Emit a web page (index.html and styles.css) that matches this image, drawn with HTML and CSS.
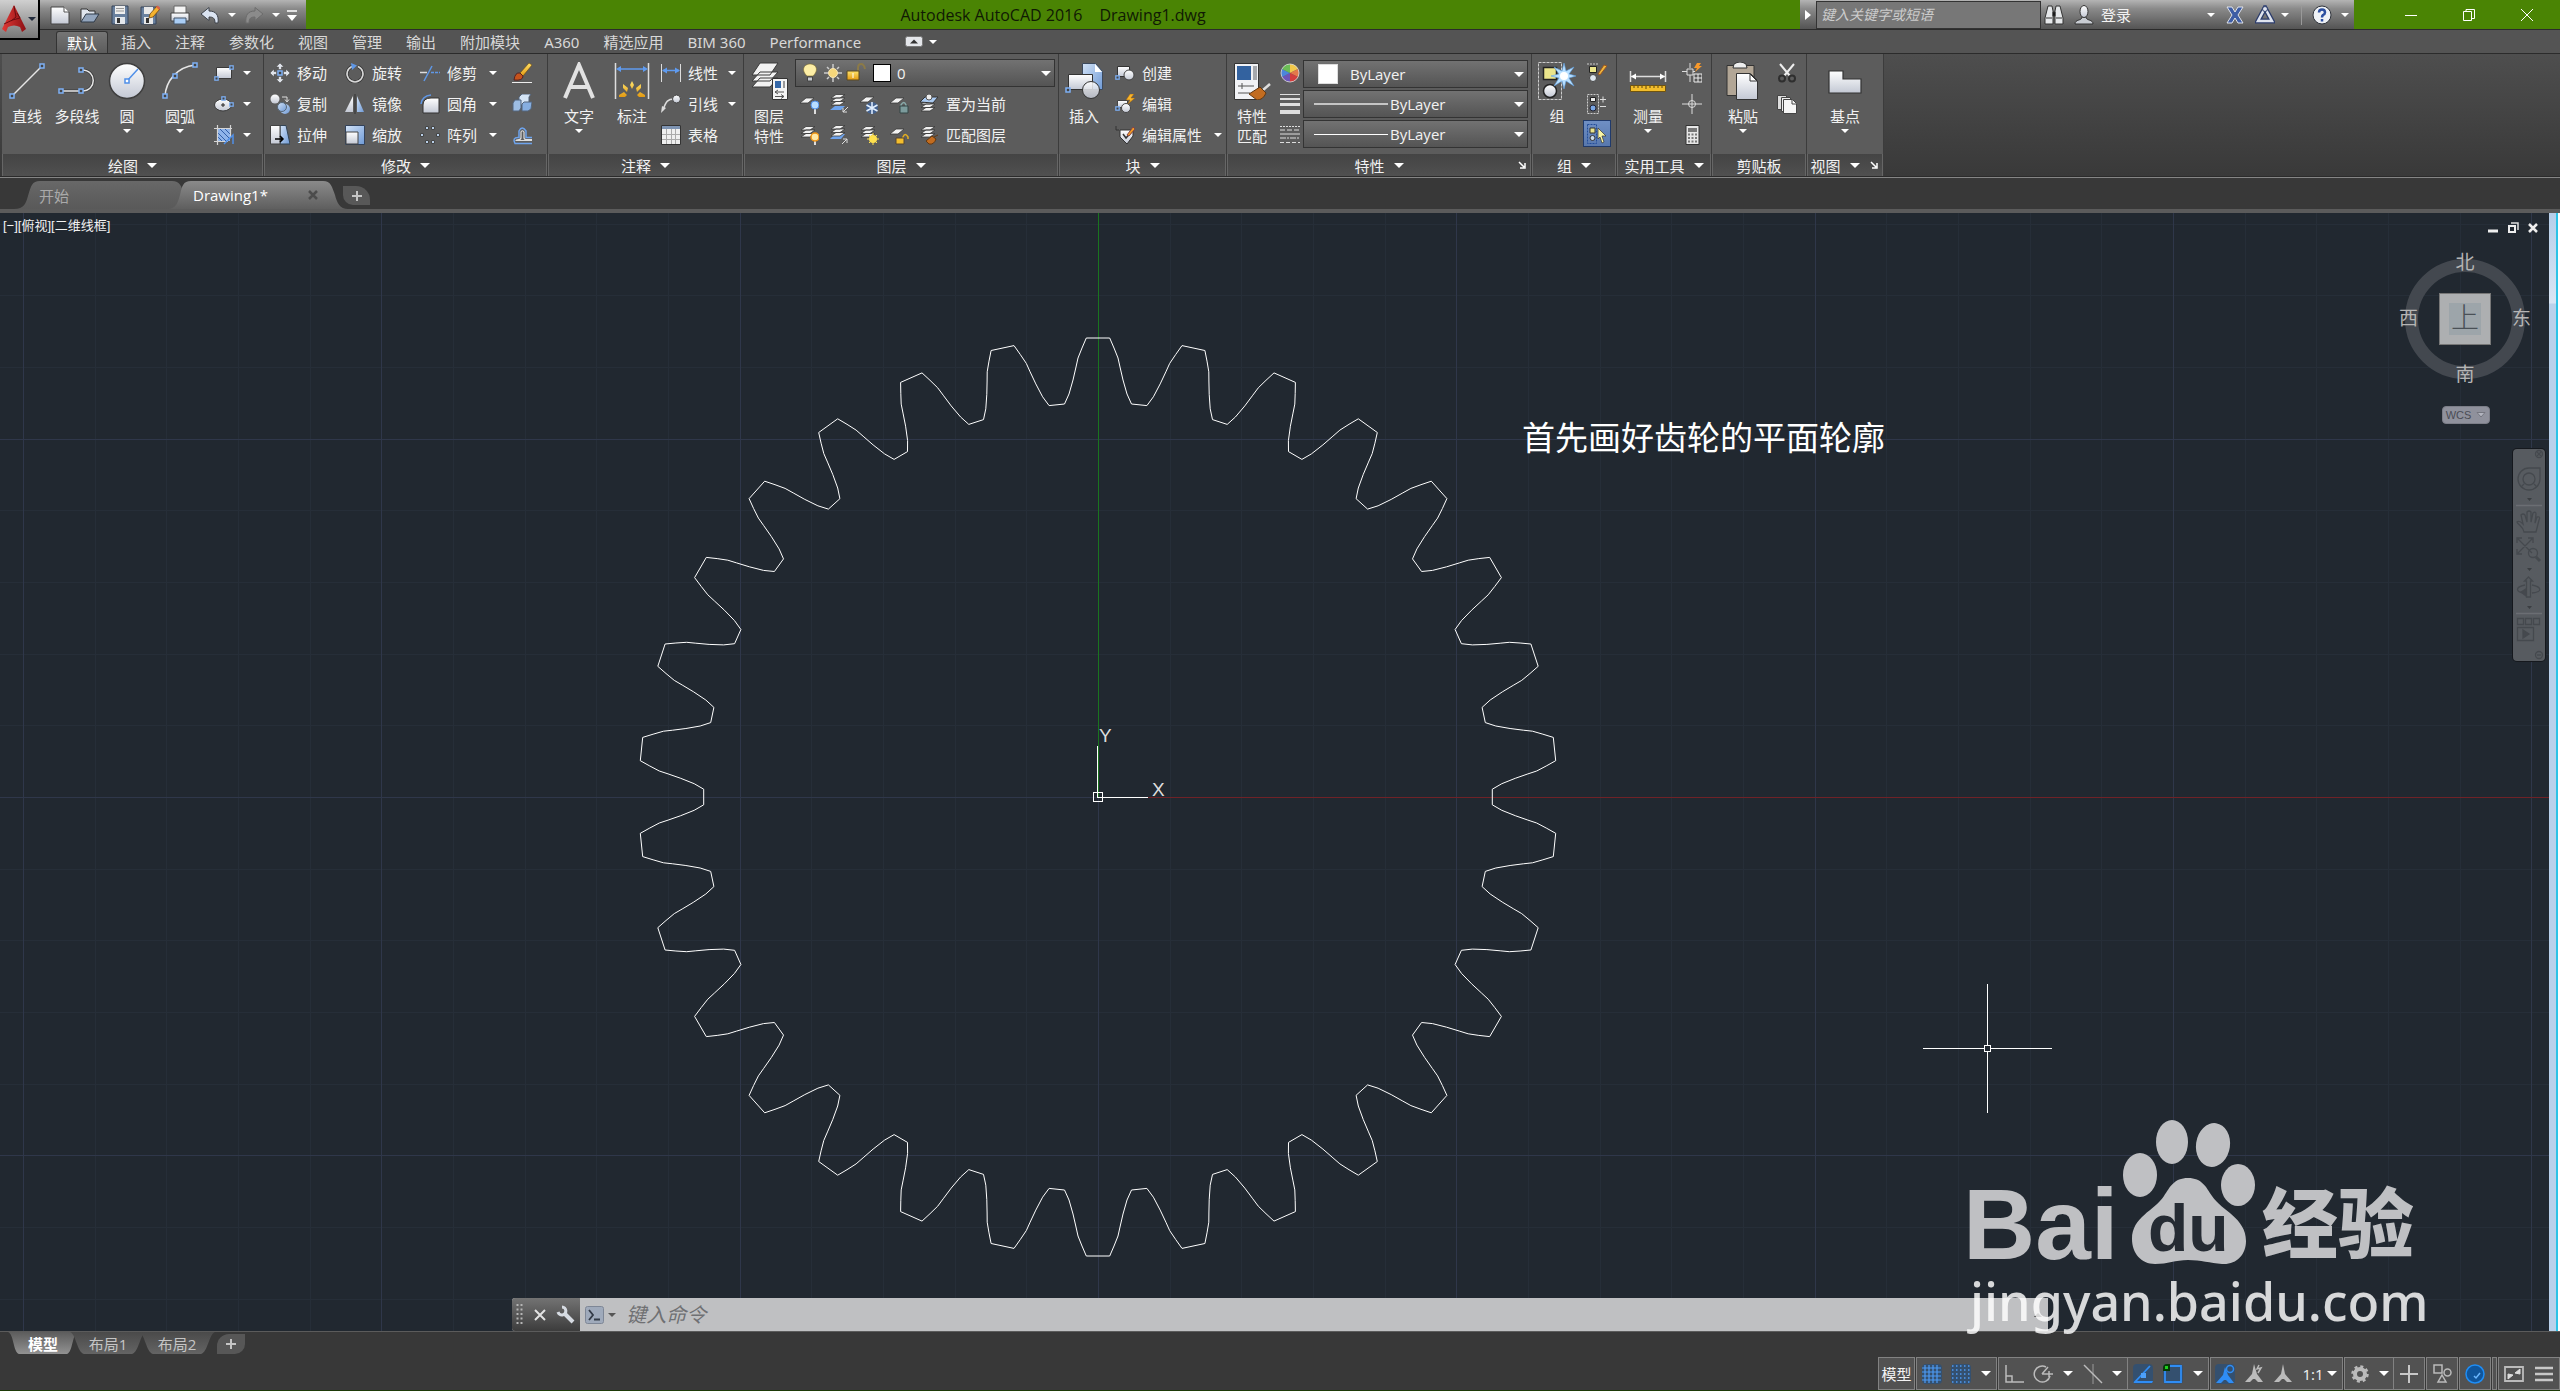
FILE: index.html
```html
<!DOCTYPE html>
<html lang="zh-CN">
<head>
    <meta charset="UTF-8">
    <meta name="viewport" content="width=device-width, initial-scale=1.0">
    <title>Autodesk AutoCAD 2016 - Drawing1.dwg</title>
    <link rel="stylesheet" href="styles.css">
</head>
<body>
    <!-- 公用渐变和图形 -->
    <svg class="defs" width="0" height="0" aria-hidden="true">
        <defs>
            <linearGradient id="metal" x1="0" y1="0" x2="0" y2="1"><stop offset="0" stop-color="#fff"/><stop offset="1" stop-color="#c3c8d4"/></linearGradient>
            <linearGradient id="blue" x1="0" y1="0" x2="1" y2="1"><stop offset="0" stop-color="#d3e3f7"/><stop offset="1" stop-color="#6f9ad6"/></linearGradient>
            <linearGradient id="red" x1="0" y1="0" x2="1" y2="0"><stop offset="0" stop-color="#e23a36"/><stop offset="1" stop-color="#8d1014"/></linearGradient>
            <linearGradient id="gold" x1="0" y1="0" x2="0" y2="1"><stop offset="0" stop-color="#ffe36b"/><stop offset="1" stop-color="#e39a12"/></linearGradient>
            <symbol id="sheets" viewBox="0 0 20 20">
                <path d="M2 14 7 10.500h9l-5 3.500zM2 10.500 7 7h9l-5 3.500zM2 7 7 3.500h9L11 7z" fill="#f2f2f2" stroke="#3a3a3a" stroke-width=".8"/>
            </symbol>
            <symbol id="sheet" viewBox="0 0 20 20">
                <path d="M1 9 7 4h8L9 9z" fill="#f2f2f2" stroke="#3a3a3a" stroke-width=".8"/>
            </symbol>
            <symbol id="node" viewBox="0 0 6 6">
                <rect x="1" y="1" width="4" height="4" fill="#444" stroke="#7db0f5" stroke-width="1.500"/>
            </symbol>
        </defs>
    </svg>
    <div class="app">
        <header class="titlebar">
            <button class="app-btn" aria-label="应用程序">
                <svg width="24" height="28" viewBox="0 0 24 28"><path d="M12 0 24 24l-4 3-2-5q-6-3-12 0l-2 5-4-3z" fill="url(#red)"/><path d="M2 19q9-5 16-6l-3-5M12 1l2 11-5 4" fill="none" stroke="#6b0c10" stroke-width="1"/></svg>
                <i class="caret dark"></i>
            </button>
            <div class="qat">
                <button aria-label="新建"><svg viewBox="0 0 20 20"><path d="M1 2h13l5 5v12H1z" fill="url(#metal)" stroke="#444"/><path d="M14 2v5h5" fill="#fff" stroke="#555"/></svg></button>
                <button aria-label="打开"><svg viewBox="0 0 20 20"><path d="M1 17V4h6l2 2h6v4" fill="#dfe5ee" stroke="#333"/><path d="M1 17 6 9h13l-5 8z" fill="#93a5bd" stroke="#2f3a48"/></svg></button>
                <button aria-label="保存"><svg viewBox="0 0 20 20"><path d="M2 1h16v18H2z" fill="#69809e" stroke="#36445a"/><path d="M5 1h10v8H5z" fill="#eee"/><path d="M6 3.500h8M6 6h8" stroke="#999"/><path d="M5 12h10v7H5z" fill="#e3e7ec"/><path d="M7 13h3v5H7z" fill="#333"/></svg></button>
                <button aria-label="另存为"><svg viewBox="0 0 20 20"><path d="M1 2h15v17H1z" fill="#69809e" stroke="#36445a"/><path d="M4 2h9v7H4zM4 12h9v7H4z" fill="#e8e8e8"/><path d="M6 13h3v5H6z" fill="#333"/><path d="m9 13 1-4 7-8 3 3-7 8z" fill="#f5b32f" stroke="#704811" stroke-width=".8"/><path d="m16 2 1.500-1.500L20.500 3 19 5z" fill="#d8604a"/></svg></button>
                <button aria-label="打印"><svg viewBox="0 0 20 20"><path d="M4 1h12v8H4z" fill="#f4f4f4" stroke="#666"/><path d="M1 8h18v8H1z" fill="url(#metal)" stroke="#444"/><path d="M4 13h12v6H4z" fill="#a9cdf5" stroke="#456"/></svg></button>
                <button aria-label="放弃"><svg viewBox="0 0 20 20"><path d="M1 9 9 2.500V6c7 0 10 4 9 12h-3c0-5-2-6-6-6v3.500z" fill="#dbe4f2" stroke="#3e434b"/></svg></button>
                <i class="caret qat-caret"></i>
                <button aria-label="重做"><svg viewBox="0 0 20 20"><path d="m19 9-8-6.500V6C4 6 1 10 2 18h3c0-5 2-6 6-6v3.500z" fill="#8b8b8b" stroke="#6c6c6c"/></svg></button>
                <i class="caret qat-caret"></i>
                <button class="qat-more" aria-label="自定义"><svg viewBox="0 0 20 20"><path d="M5 6h10" stroke="#fff" stroke-width="1.500"/><path d="M5 10h10l-5 6z" fill="#fff"/></svg></button>
            </div>
            <h1 class="title"><span>Autodesk AutoCAD 2016</span><span>Drawing1.dwg</span></h1>
            <div class="infocenter">
                <button class="info-toggle" aria-label="展开"><svg width="6" height="10" viewBox="0 0 6 10"><path d="M0 0l6 5-6 5z" fill="#fff"/></svg></button>
                <input class="search" type="text" placeholder="键入关键字或短语" aria-label="搜索">
                <button aria-label="查找"><svg viewBox="0 0 20 20"><path d="M4 1h4l1 5v13H1v-6zM12 1h4l3 12v6h-8V6z" fill="#e6e8ea" stroke="#333"/><path d="M2 13h6M12 13h6M9 7h2v4H9z" stroke="#333"/></svg></button>
                <button class="login"><svg viewBox="0 0 20 20"><path d="M1 19c0-5 7-3 7-7h4c0 4 7 2 7 7z" fill="#c8ccd2" stroke="#333"/><ellipse cx="10" cy="6.500" rx="4" ry="6" fill="url(#metal)" stroke="#333"/></svg>登录<i class="caret"></i></button>
                <button aria-label="Exchange"><svg viewBox="0 0 20 20"><path d="M2 2h5l3 5 3-5h5l-5 8 5 8h-5l-3-5-3 5H2l5-8z" fill="#3e5da5" stroke="#e0e3ea"/></svg></button>
                <button class="a360" aria-label="A360"><svg viewBox="0 0 20 20"><path d="M10 3 17 16H3z" fill="none" stroke="#2c3d6c" stroke-width="5"/><path d="M10 3 17 16H3z" fill="none" stroke="#dfe4ef" stroke-width="2.500"/><circle cx="10" cy="4" r="2.500" fill="#dfe4ef" stroke="#2c3d6c"/></svg><i class="caret"></i></button>
                <button class="help" aria-label="帮助"><svg viewBox="0 0 20 20"><circle cx="10" cy="10" r="9" fill="#eef1f5" stroke="#30343c"/><path d="M7 7.500q0-3 3-3t3 3q0 1.500-2 2.500-1 1-1 2.500M10 14v2.500" fill="none" stroke="#2c4fa0" stroke-width="2.500"/></svg><i class="caret"></i></button>
            </div>
            <div class="win-controls">
                <button aria-label="最小化"><svg width="12" height="12"><path d="M0 6.500h12" stroke="#fff"/></svg></button>
                <button aria-label="还原"><svg width="12" height="12"><path d="M.5 2.500h8v9h-8zM3 2V.5h8.500v9H9" fill="none" stroke="#fff"/></svg></button>
                <button aria-label="关闭"><svg width="12" height="12"><path d="m0 0 12 12M12 0 0 12" stroke="#fff"/></svg></button>
            </div>
        </header>

        <nav class="ribbon-tabs">
            <button class="active">默认</button>
            <button>插入</button>
            <button>注释</button>
            <button>参数化</button>
            <button>视图</button>
            <button>管理</button>
            <button>输出</button>
            <button>附加模块</button>
            <button>A360</button>
            <button>精选应用</button>
            <button>BIM 360</button>
            <button>Performance</button>
            <button class="ribbon-min" aria-label="最小化功能区"><svg width="18" height="12" viewBox="0 0 18 12"><rect x=".5" y=".5" width="17" height="10" rx="2" fill="#e4e6ea" stroke="#777"/><path d="M5 7.500 9 3.500l4 4z" fill="#333"/></svg><i class="caret"></i></button>
        </nav>

        <section class="ribbon">
            <div class="panel panel-draw">
                <div class="panel-body">
                    <button class="big"><svg viewBox="0 0 38 38"><path d="M4 34 34 4" stroke="#e6e6e6" stroke-width="1.500"/><use href="#node" x="1" y="31" width="6" height="6"/><use href="#node" x="31" y="1" width="6" height="6"/></svg><span>直线</span></button>
                    <button class="big"><svg viewBox="0 0 38 38"><path d="M3 29h21c15 0 15-21 0-21" fill="none" stroke="#3c3c3c" stroke-width="3"/><path d="M3 29h21c15 0 15-21 0-21" fill="none" stroke="#e6e6e6" stroke-width="1.500"/><use href="#node" x="0" y="26" width="6" height="6"/><use href="#node" x="20" y="26" width="6" height="6"/><use href="#node" x="20" y="5" width="6" height="6"/></svg><span>多段线</span></button>
                    <button class="big"><svg viewBox="0 0 38 38"><circle cx="19" cy="19" r="17.500" fill="url(#metal)" stroke="#3f3f3f" stroke-width="1.500"/><path d="M19 19 30 7" stroke="#4f8fe8" stroke-width="1.500"/><rect x="17" y="17" width="4" height="4" fill="#fff" stroke="#4f8fe8" stroke-width="1.500"/></svg><span>圆</span><i class="caret"></i></button>
                    <button class="big arc"><svg viewBox="0 0 38 38"><path d="M4 34C5 19 16 5 34 3" fill="none" stroke="#e6e6e6" stroke-width="1.500"/><use href="#node" x="1" y="31" width="6" height="6"/><use href="#node" x="11" y="11" width="6" height="6"/><use href="#node" x="31" y="0" width="6" height="6"/></svg><span>圆弧</span><i class="caret"></i></button>
                    <div class="col">
                        <button class="tool" aria-label="矩形"><svg viewBox="0 0 20 20"><path d="M2.500 4.500h15v11h-15z" fill="url(#metal)" stroke="#3a3a3a"/><use href="#node" x="0" y="13" width="5" height="5"/><use href="#node" x="15" y="2" width="5" height="5"/></svg><i class="caret"></i></button>
                        <button class="tool" aria-label="椭圆"><svg viewBox="0 0 20 20"><ellipse cx="9" cy="11" rx="8.500" ry="6" fill="url(#metal)" stroke="#3a3a3a"/><path d="M9 9v4M7 11h4" stroke="#222"/><use href="#node" x="7" y="2" width="5" height="5"/><use href="#node" x="15" y="8" width="5" height="5"/></svg><i class="caret"></i></button>
                        <button class="tool" aria-label="图案填充"><svg viewBox="0 0 20 20"><path d="M4 4h12v12H4z" fill="#8fb4ea"/><path d="M4 8l8 8M4 12l4 4M6 4l10 10M11 4l5 5" stroke="#335fa8"/><path d="M0 3.500h18M0 16.500h14M3.500 0v20M16.500 0v13" stroke="#d5d5d5" stroke-width="1.200"/><path d="m10 19 9-9v9" fill="none" stroke="#4f8fe8" stroke-width="1.500"/></svg><i class="caret"></i></button>
                    </div>
                </div>
                <button class="panel-title">绘图<i class="caret wide"></i></button>
            </div>

            <div class="panel panel-modify">
                <div class="panel-body">
                    <div class="col w75">
                        <button class="tool"><svg viewBox="0 0 20 20"><path d="M10 0 14 4h-2.500v2.500h-3V4H6zM10 20l-4-4h2.500v-2.500h3V16H14zM0 10l4-4v2.500h2.500v3H4V14zM20 10l-4 4v-2.500h-2.500v-3H16V6z" fill="#dfe3ea" stroke="#444" stroke-width=".5"/><use href="#node" x="7" y="7" width="6" height="6"/></svg>移动</button>
                        <button class="tool"><svg viewBox="0 0 20 20"><circle cx="5" cy="5" r="4.500" fill="url(#metal)"/><circle cx="15" cy="15" r="5" fill="url(#blue)"/><circle cx="12" cy="13" r="4.500" fill="url(#blue)" stroke="#567"/><path d="M12 3h5v4M15 5.500 17 8l2-2.500" fill="none" stroke="#ddd"/></svg>复制</button>
                        <button class="tool"><svg viewBox="0 0 20 20"><path d="M10 .500h6L20 19H10z" fill="url(#blue)" stroke="#345"/><path d="M.5.500H10V19H.500z" fill="url(#metal)" stroke="#444"/><path d="M5 14h8m-3-3 3 3-3 3" fill="none" stroke="#000" stroke-width="1.500"/></svg>拉伸</button>
                    </div>
                    <div class="col w75">
                        <button class="tool"><svg viewBox="0 0 20 20"><path d="M13 3.500a8 8 0 1 1-6 0" fill="none" stroke="#333" stroke-width="3"/><path d="M13 3.500a8 8 0 1 1-6 0" fill="none" stroke="#d9d9d9" stroke-width="1.500"/><path d="m6 0 6 2.500L7 7z" fill="#5f97e6"/></svg>旋转</button>
                        <button class="tool"><svg viewBox="0 0 20 20"><path d="M8 2v16H0z" fill="url(#metal)"/><path d="M12 2v16h7z" fill="url(#blue)"/><path d="M10 0v20" stroke="#333" stroke-width="1"/></svg>镜像</button>
                        <button class="tool"><svg viewBox="0 0 20 20"><path d="M.5.500h19v19H.500z" fill="url(#blue)" stroke="#33425a"/><path d="M1 7h12v12H1z" fill="url(#metal)" stroke="#444"/></svg>缩放</button>
                    </div>
                    <div class="col w92">
                        <button class="tool"><svg viewBox="0 0 20 20"><path d="M0 9.500h7" stroke="#ddd" stroke-width="1.500"/><path d="M4 18 12 3" stroke="#5f97e6" stroke-width="1.500"/><path d="M11 9.500h9" stroke="#5f97e6" stroke-width="1.500" stroke-dasharray="3 1"/></svg>修剪<i class="caret"></i></button>
                        <button class="tool"><svg viewBox="0 0 20 20"><path d="M3 19V11q0-7 8-7h8v15z" fill="url(#metal)" stroke="#333"/><path d="M1 10Q2 2 11 1" fill="none" stroke="#5f97e6" stroke-width="1.500"/></svg>圆角<i class="caret"></i></button>
                        <button class="tool"><svg viewBox="0 0 20 20" fill="#b9cfe8" stroke="#444"><path d="M5.500 1.500h3v3h-3zM11.500 1.500h3v3h-3zM16.500 8.500h3v3h-3zM11.500 15.500h3v3h-3zM5.500 15.500h3v3h-3zM.5 8.500h3v3h-3z"/></svg>阵列<i class="caret"></i></button>
                    </div>
                    <div class="col">
                        <button class="tool" aria-label="删除"><svg viewBox="0 0 20 20"><path d="m8 10 9-10 3 2-9 11z" fill="url(#gold)" stroke="#6a4510" stroke-width=".6"/><path d="M2 17q1-8 6-7l3 3q0 5-9 4z" fill="#c5531c" stroke="#522"/><path d="M0 19.500h20" stroke="#eee"/></svg></button>
                        <button class="tool" aria-label="分解"><svg viewBox="0 0 20 20"><path d="M7 3l3-3h9l-2 3v6l-3 2H7z" fill="#d5e5f6" stroke="#53657c"/><path d="M1 9l2-3h6v8l-2 3H1z" fill="#9dbde3" stroke="#53657c"/><path d="M10 10l2-2h8l-1 7-3 2h-6z" fill="#86aee0" stroke="#53657c"/></svg></button>
                        <button class="tool" aria-label="偏移"><svg viewBox="0 0 20 20"><path d="M20 18.500H3q-3-6 3-6h1V6q3-6 7 0v6.500h6" fill="none" stroke="#6ea3ec" stroke-width="1.500"/><path d="M20 15.500H4q0-1 3-1 2 0 2-2V7q1-2.500 3 0v5.500q0 2 2 2h6" fill="none" stroke="#ddd" stroke-width="1.200"/></svg></button>
                    </div>
                </div>
                <button class="panel-title">修改<i class="caret wide"></i></button>
            </div>

            <div class="panel panel-annotate">
                <div class="panel-body">
                    <button class="big"><svg viewBox="0 0 38 38"><path d="M5 36 19 3l14 33M10 25h18" fill="none" stroke="#e2e2e2" stroke-width="4"/></svg><span>文字</span><i class="caret"></i></button>
                    <button class="big"><svg viewBox="0 0 38 38"><path d="M2.500 1v36M35.500 1v36" stroke="#ddd" stroke-width="1.500"/><path d="M5 7h28" stroke="#5f9bf0" stroke-width="1.500"/><path d="m3 7 5-3v6zM35 7l-5-3v6z" fill="#5f9bf0"/><path d="m19 19 2 4-2 4-2-4zM10 22l5 4-1 4-4-4zM28 22l-5 4 1 4 4-4zM6 33l5-3 3 3-2 2H6zM32 33l-5-3-3 3 2 2h6z" fill="url(#gold)"/></svg><span>标注</span></button>
                    <div class="col">
                        <button class="tool linear"><svg viewBox="0 0 20 20"><path d="M.5 1v18M19.500 1v18" stroke="#ddd"/><path d="M2 7.500h16" stroke="#5f9bf0" stroke-width="1.500"/><path d="m1 7.500 5-3v6zM19 7.500l-5-3v6z" fill="#5f9bf0"/></svg>线性<i class="caret"></i></button>
                        <button class="tool linear"><svg viewBox="0 0 20 20"><path d="M2 16C5 7 7 5 13 5" fill="none" stroke="#ddd" stroke-width="1.500"/><path d="m0 19 1-7 4 2z" fill="#ddd"/><circle cx="15.500" cy="5" r="4" fill="url(#metal)" stroke="#444"/></svg>引线<i class="caret"></i></button>
                        <button class="tool"><svg viewBox="0 0 20 20"><path d="M.5.500h19v19H.500z" fill="#efefef" stroke="#333"/><path d="M1 1h18v3H1z" fill="#7e94b3"/><path d="M1 9.500h18M1 14.500h18M5.500 4v15M10.500 4v15M14.500 4v15" stroke="#aaa"/></svg>表格</button>
                    </div>
                </div>
                <button class="panel-title">注释<i class="caret wide"></i></button>
            </div>

            <div class="panel panel-layer">
                <div class="panel-body">
                    <button class="big"><svg viewBox="0 0 38 38"><g fill="#f2f2f2" stroke="#3a3a3a"><path d="M2 25 10 16h18l-8 9zM2 19l8-9h18l-8 9zM2 13l8-12h18l-8 12z"/></g><path d="M22.500 16.500h15v21h-15z" fill="#f4f4f4" stroke="#333"/><path d="M25 19h6v7h-6z" fill="#3467a8"/><path d="M33 19h2v7h-2z" fill="#999"/><path d="M25 30h9m-6-2-3 2 3 2M25 34.500h9m-3-2 3 2-3 2" fill="none" stroke="#555"/></svg><span>图层<br>特性</span></button>
                    <div class="layer-tools">
                        <div class="combo layer-combo">
                            <svg width="20" height="22" viewBox="0 0 20 22"><path d="M7 14C0 7 5 2 10 2s10 5 3 12z" fill="#fdeea6" stroke="#7b6a2b" stroke-width=".6"/><path d="M7.500 15h5v4h-5z" fill="#c5c9ce" stroke="#444"/></svg>
                            <svg width="20" height="22" viewBox="0 0 20 22"><path d="M10 2v4M10 16v4M1 11h4M15 11h4M4 5l2 2M14 15l2 2M16 5l-2 2M6 15l-2 2" stroke="#ccc" stroke-width="1.500"/><circle cx="10" cy="11" r="4.500" fill="#f6d77a" stroke="#fae9b8"/></svg>
                            <svg width="20" height="22" viewBox="0 0 20 22"><path d="M12 10V6q0-4 3-4t4 5" fill="none" stroke="#8b7a48" stroke-width="2"/><path d="M1 9h12v9H1z" fill="url(#gold)" stroke="#5a4920"/><path d="M7 11v5" stroke="#fff"/></svg>
                            <i class="swatch black"></i>
                            <select aria-label="图层"><option>0</option></select>
                            <i class="caret wide"></i>
                        </div>
                        <div class="icon-row">
                            <button aria-label="关闭图层"><svg viewBox="0 0 20 20"><use href="#sheet"/><path d="M16 14v6" stroke="#ddd" stroke-width="2"/><circle cx="16" cy="11" r="4" fill="#b7dcff" stroke="#4f8fe8"/></svg></button>
                            <button aria-label="隔离"><svg viewBox="0 0 20 20"><path d="M1 16 6 12h10l-4 4z" fill="#6ea3ec"/><use href="#sheets" y="-3"/><path d="m19 13-5 5m0-4v4h4" fill="none" stroke="#ddd"/></svg></button>
                            <button aria-label="冻结"><svg viewBox="0 0 20 20"><use href="#sheet" y="-1"/><circle cx="13" cy="14" r="6" fill="#44628f"/><path d="M13 8v12M7.500 11l11 6M18.500 11l-11 6" stroke="#e3f0ff" stroke-width="1.500"/></svg></button>
                            <button aria-label="锁定"><svg viewBox="0 0 20 20"><use href="#sheet"/><path d="M12 13v-2q3-5 5 0v2" fill="none" stroke="#8aa" stroke-width="1.500"/><path d="M11 12h8v7h-8z" fill="#7c9b9c" stroke="#344"/></svg></button>
                            <button class="wide-tool"><svg viewBox="0 0 20 20"><use href="#sheets" y="3"/><path d="M1 8 6 3h13l-5 6z" fill="#a9c9f0" stroke="#333"/><circle cx="10" cy="3" r="3" fill="#eee" stroke="#555"/></svg>置为当前</button>
                        </div>
                        <div class="icon-row">
                            <button aria-label="打开所有图层"><svg viewBox="0 0 20 20"><use href="#sheets" y="-2"/><path d="M16 15v5" stroke="#ddd" stroke-width="2"/><circle cx="16" cy="12" r="4" fill="#ffe7a5" stroke="#ef9415" stroke-width="1.500"/></svg></button>
                            <button aria-label="取消隔离"><svg viewBox="0 0 20 20"><path d="M1 14 6 9h10l-4 5z" fill="#6ea3ec"/><use href="#sheets" y="-3"/><path d="m13 19 5-5m-4 0h4v4" fill="none" stroke="#ddd"/></svg></button>
                            <button aria-label="解冻"><svg viewBox="0 0 20 20"><use href="#sheets" y="-2"/><path d="M14 8v12M8 14h12M10 10l8 8M18 10l-8 8" stroke="#ffe14d"/><circle cx="14" cy="14" r="4" fill="#ffe14d"/></svg></button>
                            <button aria-label="解锁"><svg viewBox="0 0 20 20"><use href="#sheet"/><path d="M14 13v-1q2-5 5 0v2" fill="none" stroke="#e4ae21" stroke-width="1.500"/><path d="M7 13h8v6H7z" fill="#f4be2d" stroke="#543"/></svg></button>
                            <button class="wide-tool"><svg viewBox="0 0 20 20"><use href="#sheets" y="-2"/><path d="m15 12 4-2M7 16l6-5 4 3q-2 6-7 5z" fill="#c26c20" stroke="#623810"/></svg>匹配图层</button>
                        </div>
                    </div>
                </div>
                <button class="panel-title">图层<i class="caret wide"></i></button>
            </div>

            <div class="panel panel-block">
                <div class="panel-body">
                    <button class="big"><svg viewBox="0 0 38 38"><path d="M17.500 1.500h13l7 8v18h-20z" fill="url(#blue)" stroke="#3c4a5e"/><path d="M30 2v8h7z" fill="#fff"/><path d="M3.500 12.500h24v15h-24z" fill="url(#metal)" stroke="#333"/><circle cx="26" cy="28" r="8.500" fill="url(#metal)" stroke="#333" fill-opacity=".85"/><use href="#node" x="0" y="25" width="6" height="6"/></svg><span>插入</span></button>
                    <div class="col">
                        <button class="tool"><svg viewBox="0 0 20 20"><path d="M2.500 3.500h12v10h-12z" fill="url(#metal)" stroke="#333"/><circle cx="14" cy="12" r="5" fill="url(#metal)" stroke="#444"/><use href="#node" x="0" y="12" width="5" height="5"/></svg>创建</button>
                        <button class="tool"><svg viewBox="0 0 20 20"><path d="M2.500 6.500h10v7h-10z" fill="url(#metal)" stroke="#444"/><circle cx="11" cy="14" r="4.500" fill="url(#metal)" stroke="#444"/><path d="M15 0 11 6h4l-2 4 7-6h-4l3-4z" fill="#f8b52b" stroke="#9b5c10" stroke-width=".5"/><use href="#node" x="0" y="12" width="5" height="5"/></svg>编辑</button>
                        <button class="tool"><svg viewBox="0 0 20 20"><path d="M1 1v4h3" fill="none" stroke="#333"/><path d="M5 5h13v6l-6 8-7-7z" fill="url(#metal)" stroke="#333"/><path d="m8 9 3 4 7-8" fill="none" stroke="#333" stroke-width="1.500"/><path d="m12 10 6-8 2 2-6 7z" fill="#ef9a25" stroke="#844"/></svg>编辑属性<i class="caret"></i></button>
                    </div>
                </div>
                <button class="panel-title">块<i class="caret wide"></i></button>
            </div>

            <div class="panel panel-props">
                <div class="panel-body">
                    <button class="big"><svg viewBox="0 0 38 38"><path d="M1.500 1.500h24v36h-24z" fill="#f1f2f5" stroke="#333"/><path d="M4 4h14v14H4z" fill="#33629f"/><path d="M20 4h4v14h-4z" fill="#a5a8ad"/><path d="M5 24h16M9 21v6M5 31h12" stroke="#555"/><path d="m30 28 7-6" stroke="#ddd" stroke-width="2.500"/><path d="M16 32 27 25l6 6q-3 7-9 7z" fill="#c26c20" stroke="#623810"/></svg><span>特性<br>匹配</span></button>
                    <div class="prop-icons">
                        <svg viewBox="0 0 20 20"><path d="M10 10V1a9 9 0 0 1 8 5z" fill="#f2c84b"/><path d="m10 10 8-4a9 9 0 0 1 0 8z" fill="#e4784a"/><path d="m10 10 8 4a9 9 0 0 1-8 5z" fill="#d33d3d"/><path d="M10 10v9a9 9 0 0 1-8-5z" fill="#6d55b8"/><path d="m10 10-8 4a9 9 0 0 1 0-8z" fill="#4b86dc"/><path d="M10 10 2 6a9 9 0 0 1 8-5z" fill="#6bbd56"/><circle cx="10" cy="10" r="9" fill="none" stroke="#ddd" stroke-width=".8"/></svg>
                        <svg viewBox="0 0 20 20"><path d="M0 .500h20" stroke="#ddd"/><path d="M0 5h20" stroke="#ddd" stroke-width="2"/><path d="M0 10.500h20" stroke="#ddd" stroke-width="3"/><path d="M0 18h20" stroke="#ddd" stroke-width="4"/></svg>
                        <svg viewBox="0 0 20 20"><g stroke="#ddd"><path d="M0 1.500h20" stroke-dasharray="2 1"/><path d="M0 5h20" stroke-dasharray="5 2"/><path d="M0 9h20"/><path d="M0 13h20" stroke-dasharray="6 1 2 1"/><path d="M0 17.500h20" stroke-dasharray="4 2"/></g></svg>
                    </div>
                    <div class="prop-combos">
                        <div class="combo color-combo"><i class="swatch"></i><select aria-label="颜色"><option>ByLayer</option></select><i class="caret wide"></i></div>
                        <div class="combo"><i class="line-sample thick"></i><select aria-label="线宽"><option>ByLayer</option></select><i class="caret wide"></i></div>
                        <div class="combo"><i class="line-sample"></i><select aria-label="线型"><option>ByLayer</option></select><i class="caret wide"></i></div>
                    </div>
                </div>
                <button class="panel-title">特性<i class="caret wide"></i></button>
                <button class="launcher" aria-label="特性面板"><svg viewBox="0 0 8 8"><path d="m1 1 5 5M7 2v5H2" fill="none" stroke="#fff" stroke-width="1.500"/></svg></button>
            </div>

            <div class="panel panel-group">
                <div class="panel-body">
                    <button class="big"><svg viewBox="0 0 38 38"><path d="M.5.500h23v37H.500z" fill="none" stroke="#ccc" stroke-dasharray="3 1"/><path d="M5.500 5.500h13v12h-13z" fill="#ebe58b" stroke="#222" stroke-width="1.500"/><circle cx="12" cy="29" r="6.500" fill="url(#metal)" stroke="#222" stroke-width="1.500"/><path d="m26 1 2 8 8-4-5 7 7 2-7 2 5 8-8-5-2 8-2-8-8 5 5-8-8-2 8-2-5-7 8 4z" fill="#b9e0ff" stroke="#5c9de0" stroke-width=".6"/><circle cx="26" cy="14" r="4" fill="#fff"/></svg><span>组</span></button>
                    <div class="col">
                        <button class="tool" aria-label="组编辑"><svg viewBox="0 0 20 20"><path d="M0 1h12" stroke="#ccc" stroke-dasharray="2 1"/><path d="M2.500 3.500h7v6h-7z" fill="#ebe58b" stroke="#222"/><circle cx="6" cy="15" r="3.500" fill="#dfe8f0" stroke="#444"/><path d="m11 11 6-9 3 1-7 9z" fill="#eeb53d" stroke="#952"/></svg></button>
                        <button class="tool" aria-label="编组"><svg viewBox="0 0 20 20"><path d="M.5.500h11v19H.500z" fill="none" stroke="#ccc" stroke-dasharray="2 1"/><path d="M3.500 3.500h5v4h-5z" fill="#eee" stroke="#222"/><circle cx="6" cy="14" r="3" fill="#79a6e4" stroke="#223"/><path d="M13 5.500h6M16 2.500v6M13 12.500h6" stroke="#ddd"/></svg></button>
                        <button class="tool on" aria-label="启用组选择"><svg viewBox="0 0 20 20"><path d="M.5.500h9v19h-9z" fill="none" stroke="#234d9a" stroke-dasharray="2 1"/><path d="M3 4h5v5H3z" fill="#ebe58b" stroke="#333"/><circle cx="5.500" cy="14" r="2.500" fill="#ccdcea" stroke="#333"/><path d="m11 4 8 8h-4l2 6-2 1-2-6-2 2z" fill="#f8f4a4" stroke="#333" stroke-width=".7"/></svg></button>
                    </div>
                </div>
                <button class="panel-title">组<i class="caret wide"></i></button>
            </div>

            <div class="panel panel-util">
                <div class="panel-body">
                    <button class="big"><svg viewBox="0 0 38 38"><path d="M1.500 9v11M36.500 9v11M2 14.500h34" stroke="#ddd" stroke-width="1.500"/><path d="m2 14.500 5-3v6zM36 14.500l-5-3v6z" fill="#fff"/><path d="M1.500 23.500h35v6h-35z" fill="#f2bd2b" stroke="#6f5310"/><path d="M5 24v2M9 24v2M13 24v2M17 24v3M21 24v2M25 24v2M29 24v2M33 24v2" stroke="#5c4512"/></svg><span>测量</span><i class="caret"></i></button>
                    <div class="col">
                        <button class="tool" aria-label="快速选择"><svg viewBox="0 0 20 20"><path d="M0 8.500h5M8 0v5M8 12v7M11 8.500h2" stroke="#ddd"/><path d="M5 6h6v6H5z" fill="none" stroke="#ddd"/><path d="m15 0-3 5h3l-2 4 7-6h-3l2-3z" fill="#f8992b"/><path d="M12 11h8v8h-8zM12 15h8M16 11v8" fill="#555" stroke="#eee"/></svg></button>
                        <button class="tool" aria-label="点坐标"><svg viewBox="0 0 20 20"><path d="M0 10h20M10 0v20" stroke="#ddd"/><circle cx="10" cy="10" r="3.500" fill="none" stroke="#ddd"/></svg></button>
                        <button class="tool" aria-label="计算器"><svg viewBox="0 0 20 20"><path d="M4 .500h13v19H4z" fill="#e6e6e6" stroke="#333"/><path d="M6 3h9v4H6z" fill="#777"/><path d="M6 9.500h9M6 13h9M6 16.500h9" stroke="#777" stroke-width="2" stroke-dasharray="2 1.500"/></svg></button>
                    </div>
                </div>
                <button class="panel-title">实用工具<i class="caret wide"></i></button>
            </div>

            <div class="panel panel-clip">
                <div class="panel-body">
                    <button class="big"><svg viewBox="0 0 38 38"><path d="M3 3.500h27v30H3z" fill="#b2a696" stroke="#333"/><path d="M10 2q6-4 12 0l1 4H9z" fill="#eee" stroke="#333"/><path d="M12.500 11.500h14l7 7v19h-21z" fill="url(#metal)" stroke="#333"/><path d="M26 12v7h7z" fill="#fff" stroke="#333"/></svg><span>粘贴</span><i class="caret"></i></button>
                    <div class="col">
                        <button class="tool" aria-label="剪切"><svg viewBox="0 0 20 20"><path d="m3 1 10 12M17 1 7 13" stroke="#eee" stroke-width="2"/><circle cx="5" cy="15.500" r="3" fill="none" stroke="#2e2e2e" stroke-width="2"/><circle cx="15" cy="15.500" r="3" fill="none" stroke="#2e2e2e" stroke-width="2"/></svg></button>
                        <button class="tool" aria-label="复制剪裁"><svg viewBox="0 0 20 20"><path d="M.5 1.500h9v14h-9z" fill="#ddd" stroke="#444"/><path d="M4.500 3.500h9v14h-9z" fill="#eee" stroke="#444"/><path d="M6.500 5.500h9l4 4v10h-13z" fill="#f6f6f6" stroke="#444"/><path d="M15 6v4h4" fill="none" stroke="#444"/></svg></button>
                    </div>
                </div>
                <button class="panel-title">剪贴板</button>
            </div>

            <div class="panel panel-view">
                <div class="panel-body">
                    <button class="big"><svg viewBox="0 0 38 38"><path d="M3 9h14v8h18v14H3z" fill="url(#metal)" stroke="#333" stroke-width="1.200"/></svg><span>基点</span><i class="caret"></i></button>
                </div>
                <button class="panel-title">视图<i class="caret wide"></i></button>
                <button class="launcher" aria-label="视图设置"><svg viewBox="0 0 8 8"><path d="m1 1 5 5M7 2v5H2" fill="none" stroke="#fff" stroke-width="1.500"/></svg></button>
            </div>
        </section>

        <nav class="file-tabs">
            <button class="file-tab">开始</button>
            <button class="file-tab current"><span>Drawing1*</span><svg width="10" height="10" viewBox="0 0 10 10"><path d="m1 1 8 8M9 1 1 9" stroke="#4c4c4c" stroke-width="2.500"/></svg></button>
            <button class="new-tab" aria-label="新图形"><svg width="10" height="10" viewBox="0 0 10 10"><path d="M5 0v10M0 5h10" stroke="#c5c5c5" stroke-width="2"/></svg></button>
        </nav>

        <main class="workspace">
            <div class="viewport" id="viewport">
                <svg class="drawing" width="100%" height="100%">
                    <g id="grid"></g>
                    <g id="model">
                        <g id="gear"></g>
                        <g class="ucs">
                            <path d="M-.5-51V.500H50"/>
                            <path d="M-4.500-4.500h9v9h-9z"/>
                            <text x="1" y="-55">Y</text>
                            <text x="54" y="-1">X</text>
                        </g>
                        <text class="note" x="424" y="-347">首先画好齿轮的平面轮廓</text>
                        <g class="crosshair" transform="translate(889 251)">
                            <path d="M.5-64V-2.500M.5 3.500V65M-64 .5H-2.500M3.500 .5H65"/>
                            <path d="M-2.500-2.500h6v6h-6z"/>
                        </g>
                    </g>
                </svg>
                <div class="view-label">[−][俯视][二维线框]</div>
                <div class="doc-controls">
                    <button aria-label="最小化"><svg width="12" height="12"><path d="M1 9h10" stroke="#eee" stroke-width="3"/></svg></button>
                    <button aria-label="还原"><svg width="12" height="12"><path d="M4 1h7v7" fill="none" stroke="#ddd" stroke-width="1.500"/><path d="M2 4h6v6H2z" fill="none" stroke="#eee" stroke-width="2"/></svg></button>
                    <button aria-label="关闭"><svg width="12" height="12"><path d="m2 2 8 8M10 2l-8 8" stroke="#eee" stroke-width="2.500"/></svg></button>
                </div>
                <div class="viewcube">
                    <span class="north">北</span>
                    <span class="west">西</span>
                    <div class="cube"><b>上</b></div>
                    <span class="east">东</span>
                    <span class="south">南</span>
                </div>
                <button class="wcs">WCS<svg width="10" height="6" viewBox="0 0 10 6"><path d="M1 .500h8L5 5z" fill="#b3b5bf" stroke="#74767f"/></svg></button>
                <div class="navbar">
                    <svg width="32" height="212" viewBox="0 0 32 212" fill="none" stroke="#45494e" stroke-width="1.300">
                        <circle cx="26" cy="5" r="3.500"/><path d="m24 3 4 4m0-4-4 4"/>
                        <path d="M27 30a11 11 0 1 1-11-11h11z"/><circle cx="16" cy="30" r="6"/><path d="m11 35-3 3m13-3 3 3"/>
                        <path d="M14 49h5l-2.500 3zM14 119h5l-2.500 3zM14 157h5l-2.500 3z" fill="#3b3e42" stroke="none"/>
                        <path d="M3 56.500h26M3 164.500h26" stroke="#6b6e73"/>
                        <path d="M11 83C10 77 5 76 4 73q2-2 6 2L8 66q2-2 4 0l2 7V63q2-2 4 0v10l2-9q3-2 3 1l-1 9 2-6q4-1 2 3l-3 12z"/>
                        <path d="M5 90l14 14M19 90 5 104M4 94v-5h5M15 89h5v5M4 100v5h5"/><circle cx="20" cy="104" r="4.500"/><path d="m23 108 4 4" stroke-width="3"/>
                        <path d="M13.500 148v-16h-2l4-4 4 4h-2v16z"/><path d="M12 136c-10 2-10 7 0 8m7 0c11-1 10-6 0-8"/><path d="m8 143 5-3v7z" fill="#45494e"/>
                        <path d="M4.500 169.500h6v6h-6zM12.500 169.500h6v6h-6zM20.500 169.500h6v6h-6zM4.500 178.500h16v13h-16z"/><path d="m10 181 6 4-6 4z" fill="#45494e"/>
                        <circle cx="26" cy="206" r="3.500"/><path d="M24 206h4"/>
                    </svg>
                </div>
                <div class="cmdline">
                    <div class="cmd-handle">
                        <svg width="7" height="24" viewBox="0 0 7 24"><path d="M1.500 1v22M5.500 1v22" stroke="#b5b5b5" stroke-width="2" stroke-dasharray="2 2.500"/></svg>
                        <button aria-label="关闭"><svg width="12" height="12"><path d="m1 1 10 10M11 1 1 11" stroke="#e2e2e2" stroke-width="2"/></svg></button>
                        <button aria-label="自定义"><svg width="20" height="20" viewBox="0 0 20 20"><path d="m9 9 8 8" stroke="#d6dbe2" stroke-width="4"/><path d="M6 2a4 4 0 1 1-4 5" fill="none" stroke="#d6dbe2" stroke-width="3"/></svg></button>
                    </div>
                    <label class="prompt" for="cmd"><svg width="20" height="20" viewBox="0 0 20 20"><rect x=".5" y="1.500" width="18" height="17" rx="2" fill="#9faabb" stroke="#7e8796"/><path d="m4 5 4 5-4 5M9 14.500h6" fill="none" stroke="#333b47" stroke-width="1.800"/></svg><i class="caret gray"></i></label>
                    <input id="cmd" type="text" placeholder="键入命令">
                    <i class="history"></i>
                </div>
            </div>
            <div class="edge"></div>
        </main>

        <footer class="bottom">
            <nav class="layout-tabs">
                <button class="layout-tab current">模型</button>
                <button class="layout-tab">布局1</button>
                <button class="layout-tab">布局2</button>
                <button class="new-layout" aria-label="新建布局"><svg width="10" height="10" viewBox="0 0 10 10"><path d="M5 0v10M0 5h10" stroke="#c5c5c5" stroke-width="2"/></svg></button>
            </nav>
            <div class="statusbar">
                <div class="cell model"><button>模型</button></div>
                <div class="cell w80">
                    <button class="lit" aria-label="栅格"><svg viewBox="0 0 20 20"><path d="M3 1v18M7 1v18M11 1v18M15 1v18M0 4h19M0 8h19M0 12h19M0 16h19" stroke="#4d9bf5" stroke-width="1.200"/></svg></button>
                    <button class="lit" aria-label="捕捉"><svg viewBox="0 0 20 20"><path d="M1 2h18M1 6h18M1 10h18M1 14h18M1 18h18" stroke="#4d9bf5" stroke-width="1.500" stroke-dasharray="1.500 2.500"/></svg></button>
                    <i class="caret wide"></i>
                </div>
                <div class="cell w129">
                    <button aria-label="正交"><svg viewBox="0 0 20 20"><path d="M2 1v17h18M2 12h6v6" fill="none" stroke="#bbb" stroke-width="1.500"/></svg></button>
                    <button aria-label="极轴"><svg viewBox="0 0 20 20"><path d="M17 12A8 8 0 1 1 13 3" fill="none" stroke="#bbb" stroke-width="1.500"/><path d="M9 10 15 3M9 10h11M16 7v6" fill="none" stroke="#bbb" stroke-width="1.500"/></svg></button>
                    <i class="caret wide"></i>
                    <button aria-label="等轴测"><svg viewBox="0 0 20 20"><path d="M10 0v20" stroke="#999"/><path d="m1 1 18 18" stroke="#bbb" stroke-width="1.500"/></svg></button>
                    <i class="caret wide"></i>
                </div>
                <div class="cell joined w81">
                    <button class="lit" aria-label="对象追踪"><svg viewBox="0 0 20 20"><path d="M17 2 2 18h18" fill="none" stroke="#2f8df5" stroke-width="1.800"/><path d="M8 9h5v5H8z" fill="#4da0fa"/></svg></button>
                    <button class="lit" aria-label="对象捕捉"><svg viewBox="0 0 20 20"><path d="M2 2h16v16H2z" fill="none" stroke="#2f8df5" stroke-width="1.800"/><path d="M0 0h7v7H0z" fill="#063a06"/><path d="M2 2h3v3H2z" fill="#1fd01f"/></svg></button>
                    <i class="caret wide"></i>
                </div>
                <div class="cell w132">
                    <button class="lit" aria-label="注释可见性"><svg viewBox="0 0 20 20"><path d="m10 3-2 8-7 8h5l3-3h2l3 3h5l-6-8z" fill="#2f8df5"/><circle cx="15" cy="5" r="3.500" fill="none" stroke="#2f8df5" stroke-width="1.500"/></svg></button>
                    <button aria-label="自动缩放"><svg viewBox="0 0 20 20"><path d="m10 0-2 10-7 8h5l3-3h2l3 3h5l-6-8z" fill="#bbb"/><path d="m15 1-2 4 4-1-3 5" fill="none" stroke="#bbb" stroke-width="1.500"/></svg></button>
                    <button aria-label="注释比例"><svg viewBox="0 0 20 20"><path d="m10 0-2 10-7 8h5l3-3h2l3 3h5l-7-8z" fill="#bbb"/></svg></button>
                    <button class="scale">1:1<i class="caret wide"></i></button>
                </div>
                <div class="cell w50">
                    <button aria-label="切换工作空间"><svg viewBox="0 0 20 20"><circle cx="10" cy="10" r="5" fill="none" stroke="#bbb" stroke-width="4"/><circle cx="10" cy="10" r="7.500" fill="none" stroke="#bbb" stroke-width="2.500" stroke-dasharray="3 2.900"/></svg></button>
                    <i class="caret wide"></i>
                </div>
                <div class="cell joined w32"><button aria-label="注释监视器"><svg viewBox="0 0 20 20"><path d="M10 1v18M1 10h18" stroke="#c8c8c8" stroke-width="2"/></svg></button></div>
                <div class="cell w32"><button aria-label="隔离对象"><svg viewBox="0 0 20 20" fill="none" stroke="#bbb" stroke-width="1.500"><path d="M2 1h8v8H2zM10 11l4 7H6z"/><circle cx="15.500" cy="8.500" r="3.500"/></svg></button></div>
                <div class="cell w32"><button aria-label="硬件加速"><svg viewBox="0 0 20 20"><circle cx="10" cy="10" r="9" fill="#10559b" stroke="#1e8df5" stroke-width="1.500"/><path d="m9 12 2 2 4-5" fill="none" stroke="#6bb7ff" stroke-width="1.500"/></svg></button></div>
                <div class="cell w5"></div>
                <div class="cell w62">
                    <button aria-label="全屏显示"><svg viewBox="0 0 20 20"><path d="M1 3h18v14H1z" fill="none" stroke="#bbb" stroke-width="1.800"/><path d="m4 15 5-4-5-1zM16 5l-5 4 5 1z" fill="#ddd" stroke="#ddd"/></svg></button>
                    <button aria-label="自定义"><svg viewBox="0 0 20 20"><path d="M1 4h18M1 10h18M1 16h18" stroke="#c8c8c8" stroke-width="2.500"/></svg></button>
                </div>
            </div>
        </footer>

        <!-- 水印 -->
        <svg class="watermark" width="480" height="220" viewBox="0 0 480 220" aria-label="Baidu经验">
            <g class="mark">
                <text class="wm-bai" x="3" y="139">Bai</text>
                <ellipse cx="180" cy="55" rx="17" ry="22"/>
                <ellipse cx="212" cy="22" rx="16" ry="22"/>
                <ellipse cx="253" cy="25" rx="17" ry="22" transform="rotate(8 253 25)"/>
                <ellipse cx="278" cy="65" rx="17" ry="21"/>
                <path d="M228 58c14 0 18 9 24 18 10 15 34 22 34 45 0 14-10 24-24 23-12-1-21-4-34-4s-20 4-33 4c-14 0-23-11-23-25 0-22 22-28 32-43 6-9 10-18 24-18z"/>
                <text class="wm-du" x="188" y="131">du</text>
                <text class="wm-exp" x="302" y="132">经验</text>
            </g>
            <text class="wm-url" x="10" y="201">jingyan.baidu.com</text>
        </svg>
    </div>
    <script src="script.js"></script>
</body>
</html>
```
FILE: styles.css
```css
html,
body,
h1 {
    margin: 0;
    padding: 0;
}
body {
    font-family: "Open Sans", "Noto Sans CJK SC", sans-serif;
    font-size: 15px;
    color: #f2f2f2;
    background-color: #383838;
    overflow: hidden;
}
button,
input,
select {
    margin: 0;
    padding: 0;
    border: 0;
    background: none;
    font: inherit;
    color: inherit;
    outline: none;
}
button {
    display: flex;
    align-items: center;
    justify-content: center;
    white-space: nowrap;
}
svg {
    display: block;
    flex: none;
}
.defs {
    position: absolute;
}
.app {
    position: relative;
    display: flex;
    flex-direction: column;
    height: 100vh;
    box-sizing: border-box;
    border-bottom: 1px solid #1d3a08;
}
.caret {
    flex: none;
    border: 4px solid transparent;
    border-top: 4px solid #fff;
    border-bottom: 0;
}
.caret.wide {
    border-width: 5px 5px 0;
}
.caret.dark {
    border-top-color: #222b3c;
}
.caret.gray {
    border-top-color: #555;
}

/* 标题栏 */
.titlebar {
    display: flex;
    height: 29px;
    border-bottom: 1px solid #2b2b2b;
    background-color: #4a8404;
}
.app-btn {
    position: relative;
    z-index: 2;
    width: 40px;
    height: 40px;
    gap: 2px;
    box-sizing: border-box;
    border-right: 2px solid #000;
    border-bottom: 2px solid #000;
    background: linear-gradient(#d0d0d0, #777);
}
.qat {
    display: flex;
    align-items: center;
    width: 266px;
    box-sizing: border-box;
    padding-left: 10px;
    gap: 10px;
    background: linear-gradient(#b4b4b4, #8a8a8a 30%, #545454);
}
.qat svg,
.infocenter button svg {
    width: 20px;
    height: 20px;
}
.qat-caret {
    margin: 0 -2px;
}
.qat-more {
    margin-left: -6px;
}
.title {
    flex: 1;
    display: flex;
    align-items: center;
    justify-content: center;
    gap: 17px;
    font-size: 16px;
    font-weight: normal;
    color: #101a04;
}
.infocenter {
    display: flex;
    align-items: center;
    width: 554px;
    gap: 10px;
    background: linear-gradient(#b4b4b4, #8a8a8a 30%, #545454);
}
.infocenter .info-toggle {
    width: 16px;
    height: 29px;
    margin-right: -10px;
}
.infocenter .info-toggle svg {
    width: 6px;
    height: 10px;
}
.search {
    width: 225px;
    height: 28px;
    box-sizing: border-box;
    margin-right: -7px;
    padding-left: 4px;
    border: 1px solid #333;
    background-color: #777;
    font-size: 14px;
    font-style: italic;
}
.search::placeholder {
    color: #ccc;
}
.login {
    gap: 7px;
}
.login .caret {
    margin-left: 69px;
}
.a360,
.help {
    gap: 6px;
}
.a360 {
    padding-right: 12px;
    border-right: 1px solid #999;
}
.help .caret {
    margin-left: 3px;
}
.win-controls {
    display: flex;
    width: 206px;
}
.win-controls button {
    width: 58px;
}
.win-controls button:first-child {
    margin-left: 28px;
}

/* 功能区选项卡 */
.ribbon-tabs {
    display: flex;
    align-items: flex-end;
    height: 23px;
    padding-left: 55px;
    border-bottom: 1px solid #2b2b2b;
    background-color: #545454;
    font-family: "Noto Sans", "Noto Sans CJK SC", sans-serif;
}
.ribbon-tabs button {
    height: 23px;
    margin: 0 2px;
    padding: 0 10px;
    line-height: 20px;
    color: #d8d8d8;
}
.ribbon-tabs .active {
    margin: 0 1px;
    border: 1px solid #333;
    border-bottom: 0;
    border-radius: 3px 3px 0 0;
    height: 22px;
    color: #fff;
    background: linear-gradient(#757575, #5c5c5c);
}
.ribbon-tabs .ribbon-min {
    gap: 6px;
    margin-left: 22px;
}

/* 功能区面板 */
.ribbon {
    display: flex;
    height: 122px;
    padding-left: 2px;
    border-bottom: 1px solid #2b2b2b;
    background: linear-gradient(#4e4e4e, #393939);
}
.panel {
    position: relative;
    display: flex;
    flex-direction: column;
    flex: none;
    box-sizing: border-box;
    border-right: 1px solid #3c3c3c;
    background-color: #5c5c5c;
}
.panel-body {
    flex: 1;
    display: flex;
    height: 100px;
}
.panel-title {
    height: 22px;
    gap: 9px;
    border-left: 1px solid #666;
    border-right: 1px solid #666;
    background: linear-gradient(#444, #505050);
}
.launcher {
    position: absolute;
    right: 5px;
    bottom: 7px;
}
.launcher svg {
    width: 8px;
    height: 8px;
}
.big {
    flex-direction: column;
    justify-content: flex-start;
    width: 50px;
    padding-top: 8px;
    line-height: 20px;
}
.big svg {
    width: 38px;
    height: 38px;
    margin-bottom: 6px;
}
.big .caret {
    margin-top: 3px;
}
.col {
    display: flex;
    flex-direction: column;
    padding-top: 3px;
}
.tool {
    justify-content: flex-start;
    height: 31px;
    gap: 7px;
    padding-left: 6px;
}
.tool svg {
    width: 20px;
    height: 20px;
}
.tool .caret {
    margin-left: 5px;
}
.w75 {
    width: 75px;
}
.w92 {
    width: 92px;
}
.panel-draw {
    width: 262px;
}
.panel-draw .arc {
    margin: 0 3px;
}
.panel-draw .tool .caret {
    margin-left: 2px;
}
.panel-modify {
    width: 284px;
}
.panel-annotate {
    width: 196px;
}
.panel-annotate .big {
    width: 54px;
    margin-right: -1px;
}
.panel-annotate .big:first-child {
    margin-left: 4px;
}
.panel-annotate .col {
    margin-left: -3px;
}
.linear .caret {
    margin-left: 3px;
}
.panel-layer {
    width: 315px;
}
.layer-tools {
    flex: 1;
    padding: 5px 3px 0 1px;
}
.icon-row {
    display: flex;
    gap: 10px;
    height: 31px;
    padding-left: 4px;
}
.icon-row svg {
    width: 20px;
    height: 20px;
}
.wide-tool {
    gap: 7px;
}
.combo {
    display: flex;
    align-items: center;
    height: 28px;
    box-sizing: border-box;
    padding-right: 3px;
    border: 1px solid #333;
    background: linear-gradient(#727272, #545454);
}
.combo select {
    flex: 1;
    height: 26px;
    appearance: none;
}
.combo option {
    background-color: #5c5c5c;
}
.layer-combo {
    gap: 3px;
    padding-left: 4px;
    margin-bottom: 1px;
}
.swatch {
    width: 18px;
    height: 18px;
    border: 1px solid #ddd;
    background-color: #fff;
}
.swatch.black {
    width: 16px;
    height: 16px;
    margin: 0 3px 0 4px;
    border-color: #000;
}
.panel-block {
    width: 168px;
}
.panel-block .big,
.panel-props .big,
.panel-group .big {
    width: 50px;
}
.panel-props {
    width: 305px;
}
.prop-icons {
    display: flex;
    flex-direction: column;
    gap: 11px;
    padding: 9px 3px 0;
}
.prop-icons svg {
    width: 20px;
    height: 20px;
}
.prop-combos {
    flex: 1;
    display: flex;
    flex-direction: column;
    gap: 2px;
    padding: 6px 3px 0 0;
}
.color-combo {
    gap: 12px;
    padding-left: 14px;
}
.line-sample {
    width: 74px;
    height: 1px;
    margin: 0 2px 0 10px;
    background-color: #fff;
}
.line-sample.thick {
    height: 2px;
    background-color: #c5c5c5;
}
.panel-group {
    width: 85px;
}
.panel-group .tool {
    padding: 0 4px;
    margin-left: 1px;
}
.panel-group .on {
    height: 27px;
    margin-top: 1px;
    border: 1px solid #203a6b;
    padding: 0 3px;
    background: linear-gradient(#6f8fc4, #5878ad);
}
.panel-util,
.panel-clip {
    width: 95px;
}
.panel-util .big,
.panel-clip .big {
    width: 62px;
}
.panel-util .tool,
.panel-clip .tool {
    padding-left: 3px;
}
.panel-view {
    width: 77px;
}
.panel-view .big {
    width: 76px;
}
.panel-view .panel-title {
    padding-right: 20px;
}

/* 图形选项卡 */
.file-tabs {
    display: flex;
    align-items: flex-end;
    height: 31px;
    padding-left: 14px;
    border-top: 1px solid #858585;
    border-bottom: 4px solid #5b5b5b;
    background-color: #383838;
}
.file-tab {
    justify-content: flex-start;
    width: 172px;
    height: 28px;
    padding: 0 0 0 25px;
    color: #aaa;
    background: linear-gradient(#686868, #595959);
    clip-path: path("M0 28C10 28 12 22 14 15C17 5 18 0 26 0H158C166 0 168 6 170 14L172 28Z");
}
.file-tab.current {
    justify-content: space-between;
    width: 180px;
    margin-left: -18px;
    padding-right: 30px;
    box-sizing: border-box;
    color: #fff;
    background: linear-gradient(#8a8a8a, #5f5f5f);
    clip-path: path("M0 28C8 28 10 21 12 14C14 5 15 0 23 0H155C163 0 164 6 167 14C169 22 172 28 180 28Z");
}
.new-tab {
    width: 27px;
    height: 19px;
    margin: 0 0 4px -5px;
    border-radius: 0 14px 0 10px;
    background-color: #585858;
}

/* 绘图区 */
.workspace {
    flex: 1;
    display: flex;
    min-height: 0;
}
.viewport {
    position: relative;
    flex: 1;
    overflow: hidden;
    background-color: #212830;
}
.edge {
    width: 7px;
    margin-right: 2px;
    border-right: 2px solid #2cc3e6;
    background: linear-gradient(#b6cfea, #d9e5f4 90px, #b9d1eb 91px);
    box-shadow: 2px 0 #fff;
}
.drawing {
    position: absolute;
    inset: 0;
}
.minor {
    stroke: #262e38;
}
.major {
    stroke: #2f374a;
}
.axis-x {
    stroke: #6f2227;
}
.axis-y {
    stroke: #1a741f;
}
#grid {
    shape-rendering: crispEdges;
}
#gear path {
    fill: none;
    stroke: #fff;
    stroke-width: 1px;
}
.ucs path,
.crosshair path {
    fill: none;
    stroke: #fff;
    shape-rendering: crispEdges;
}
.ucs text {
    font-family: "Liberation Sans", sans-serif;
    font-size: 19px;
    fill: #ddd;
}
.note {
    font-size: 33px;
    fill: #fff;
}
.view-label {
    position: absolute;
    left: 3px;
    top: 3px;
    font-family: "Liberation Sans", "Noto Sans CJK SC", sans-serif;
    font-size: 13px;
    line-height: 20px;
}
.doc-controls {
    position: absolute;
    right: 10px;
    top: 9px;
    display: flex;
    gap: 8px;
}
.viewcube {
    position: absolute;
    right: 18px;
    top: 40px;
    display: grid;
    grid-template: 33px 66px 33px / 32px 68px 32px;
    place-items: center;
    font-family: "Liberation Serif", "Noto Sans CJK SC", serif;
    font-size: 19px;
    line-height: 20px;
    color: #b5b5b5;
}
.viewcube::before {
    content: "";
    position: absolute;
    left: 6px;
    top: 6px;
    width: 94px;
    height: 94px;
    border: 13px solid #43484f;
    border-radius: 50%;
}
.viewcube span,
.cube {
    position: relative;
}
.north,
.south {
    grid-column: 1 / 4;
}
.north {
    align-self: start;
}
.south {
    align-self: end;
}
.west {
    justify-self: start;
}
.east {
    justify-self: end;
}
.cube {
    display: flex;
    align-items: center;
    justify-content: center;
    width: 50px;
    height: 50px;
    border: 1px solid #777;
    background-color: #adafb1;
}
.cube b {
    width: 32px;
    height: 32px;
    line-height: 32px;
    text-align: center;
    font-size: 28px;
    font-weight: 300;
    color: #4a5056;
    background-color: #9da5aa;
}
.wcs {
    position: absolute;
    right: 59px;
    top: 193px;
    width: 48px;
    height: 18px;
    gap: 5px;
    border: 1px solid #7c7e88;
    box-sizing: border-box;
    border-radius: 4px;
    background-color: #8f919c;
    font-family: "Liberation Sans", sans-serif;
    font-size: 11px;
    color: #4a4c55;
}
.navbar {
    position: absolute;
    right: 4px;
    top: 236px;
    border-radius: 4px;
    background-color: #575b60;
    box-shadow: 0 0 0 1px #15181d;
}
.cmdline {
    position: absolute;
    left: 20.1%;
    bottom: 0;
    display: flex;
    width: 60.25%;
    height: 33px;
    border-radius: 3px 0 0 3px;
    overflow: hidden;
    background-color: #bfc0c2;
}
.cmd-handle {
    display: flex;
    align-items: center;
    justify-content: space-between;
    width: 60px;
    padding: 0 4px;
    background: linear-gradient(#737373, #3c3c3c);
}
.prompt {
    display: flex;
    align-items: center;
    gap: 3px;
    padding-left: 5px;
}
.cmdline input {
    flex: 1;
    padding-left: 10px;
    font-size: 20px;
    font-style: italic;
}
.cmdline input::placeholder {
    color: #6f7073;
}
.history {
    align-self: center;
    margin-right: 6px;
    border: 4px solid transparent;
    border-top: 0;
    border-bottom: 4px solid #222;
}

/* 底部 */
.bottom {
    flex: none;
    border-top: 1px solid #5b5b5b;
    background-color: #383838;
}
.layout-tabs {
    display: flex;
    height: 25px;
    padding-left: 8px;
}
.layout-tab {
    width: 76px;
    height: 22px;
    margin-right: -7px;
    color: #c5c5c5;
    background: linear-gradient(#4a4a4a, #646464);
    clip-path: path("M0 0C6 2 7 20 14 22H62C69 20 70 2 76 0Z");
}
.layout-tab.current {
    width: 70px;
    margin-right: -8px;
    font-weight: bold;
    color: #fff;
    background: linear-gradient(#5c5c5c, #929292);
    clip-path: path("M0 0C6 2 5 20 11 22H59C65 20 64 2 70 0Z");
}
.new-layout {
    width: 28px;
    height: 20px;
    margin: 2px 0 0 9px;
    border-radius: 12px 0 10px 0;
    background-color: #575757;
}
.statusbar {
    display: flex;
    justify-content: flex-end;
    gap: 1px;
    height: 33px;
}
.cell {
    display: flex;
    align-items: center;
    justify-content: space-around;
    box-sizing: border-box;
    border: 1px solid #828282;
    background-color: #525252;
}
.cell svg {
    width: 20px;
    height: 20px;
}
.cell.joined {
    margin-left: -2px;
}
.lit svg {
    border-radius: 4px;
    background-color: #34506f;
}
.model {
    width: 37px;
}
.scale {
    gap: 4px;
}
.w5 {
    width: 5px;
}
.w32 {
    width: 32px;
}
.w50 {
    width: 50px;
}
.w62 {
    width: 62px;
}
.w80 {
    width: 81px;
}
.w81 {
    width: 82px;
}
.w129 {
    width: 130px;
}
.w132 {
    width: 133px;
}

/* 水印 */
.watermark {
    position: absolute;
    right: 120px;
    bottom: 50px;
    pointer-events: none;
}
.mark {
    fill: #bfc0c3;
}
.wm-bai {
    font-family: "Liberation Sans", sans-serif;
    font-weight: bold;
    font-size: 100px;
}
.wm-du {
    font-family: "Liberation Sans", sans-serif;
    font-weight: bold;
    font-size: 66px;
    fill: #252b33;
}
.wm-exp {
    font-weight: 900;
    font-size: 76px;
}
.wm-url {
    font-family: "Noto Sans", sans-serif;
    font-weight: 500;
    font-size: 52px;
    fill: #fff;
    fill-opacity: .82;
}
```
FILE: script.js
```js
var NS = "http://www.w3.org/2000/svg";
var viewport = document.getElementById("viewport");
var grid = document.getElementById("grid");
var model = document.getElementById("model");
var gear = document.getElementById("gear");
var step = 71.66;
var teeth = 30;

// 半个齿的轮廓，从齿顶到齿根
var flank = [[11.7, -459], [16, -449], [20, -439], [22, -430], [25, -417], [29, -403], [33.5, -393]];

function line(x1, y1, x2, y2, cls) {
    var el = document.createElementNS(NS, "line");
    el.setAttribute("x1", x1);
    el.setAttribute("y1", y1);
    el.setAttribute("x2", x2);
    el.setAttribute("y2", y2);
    el.setAttribute("class", cls);
    grid.appendChild(el);
}

function drawGrid() {
    var w = viewport.clientWidth;
    var h = viewport.clientHeight;
    var ox = Math.round(w * 0.4308);
    var oy = Math.round(h * 0.5224);
    var i, p, pass, cls;
    grid.innerHTML = "";
    // 先画细线，再画主线
    for (pass = 0; pass < 2; pass++) {
        cls = pass ? "major" : "minor";
        for (i = -40; i <= 40; i++) {
            if ((i % 5 === 0) !== (pass === 1)) continue;
            p = Math.round(ox + i * step) + 0.5;
            if (p > 0 && p < w) line(p, 0, p, h, cls);
            p = Math.round(oy + i * step) + 0.5;
            if (p > 0 && p < h) line(0, p, w, p, cls);
        }
    }
    line(ox, oy + 0.5, w, oy + 0.5, "axis-x");
    line(ox + 0.5, 0, ox + 0.5, oy, "axis-y");
    model.setAttribute("transform", "translate(" + ox + " " + oy + ")");
}

function drawGear() {
    var pts = [];
    for (var t = 0; t < teeth; t++) {
        var a = t * 2 * Math.PI / teeth;
        var left = flank.map(function (p) { return [-p[0], p[1]]; }).reverse();
        left.concat(flank).forEach(function (p) {
            var x = p[0] * Math.cos(a) - p[1] * Math.sin(a);
            var y = p[0] * Math.sin(a) + p[1] * Math.cos(a);
            pts.push(x.toFixed(1) + " " + y.toFixed(1));
        });
    }
    var path = document.createElementNS(NS, "path");
    path.setAttribute("d", "M" + pts.join("L") + "Z");
    gear.appendChild(path);
}

drawGear();
drawGrid();
window.onresize = drawGrid;
```
